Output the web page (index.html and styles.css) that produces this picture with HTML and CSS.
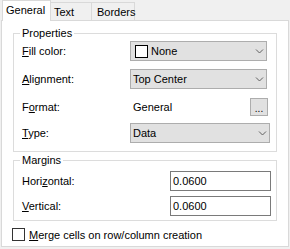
FILE: index.html
```html
<!DOCTYPE html>
<html lang="en">
<head>
    <meta charset="UTF-8">
    <title>Cell properties</title>
    <link rel="stylesheet" href="styles.css">
</head>
<body>
    <div class="dialog">
        <div class="tabs">
            <div class="tab active">General</div>
            <div class="tab tab-text">Text</div>
            <div class="tab tab-borders">Borders</div>
        </div>
        <div class="panel">
            <fieldset class="group props">
                <legend>Properties</legend>
                <div class="row first">
                    <label><u>F</u>ill color:</label>
                    <div class="combo">
                        <span class="swatch"></span>None
                        <svg class="chev" width="9" height="5" viewBox="0 0 9 5"><path d="M1 0.5 L4.5 4 L8 0.5" fill="none" stroke="#606060"/></svg>
                    </div>
                </div>
                <div class="row">
                    <label><u>A</u>lignment:</label>
                    <div class="combo">
                        Top Center
                        <svg class="chev" width="9" height="5" viewBox="0 0 9 5"><path d="M1 0.5 L4.5 4 L8 0.5" fill="none" stroke="#606060"/></svg>
                    </div>
                </div>
                <div class="row">
                    <label>F<u>o</u>rmat:</label>
                    <span class="value">General</span>
                    <div class="dots">...</div>
                </div>
                <div class="row type">
                    <label><u>T</u>ype:</label>
                    <div class="combo wide">
                        Data
                        <svg class="chev" width="9" height="5" viewBox="0 0 9 5"><path d="M1 0.5 L4.5 4 L8 0.5" fill="none" stroke="#606060"/></svg>
                    </div>
                </div>
            </fieldset>
            <fieldset class="group margins">
                <legend>Margins</legend>
                <div class="row first">
                    <label class="long">Hori<u>z</u>ontal:</label>
                    <input type="text" value="0.0600">
                </div>
                <div class="row">
                    <label class="long"><u>V</u>ertical:</label>
                    <input type="text" value="0.0600">
                </div>
            </fieldset>
            <div class="check">
                <span class="box"></span>
                <span><u>M</u>erge cells on row/column creation</span>
            </div>
        </div>
    </div>
</body>
</html>
```

FILE: styles.css
```css
* {
    box-sizing: border-box;
}
body {
    margin: 0;
    background: #f0f0f0;
    font: 11px "Liberation Sans", Arial, sans-serif;
    color: #000;
}
.dialog {
    width: 290px;
    height: 249px;
}

/* tabs */
.tabs {
    display: flex;
    align-items: flex-end;
    height: 20px;
    padding-left: 2px;
}
.tab {
    display: flex;
    align-items: center;
    height: 18px;
    padding-left: 3px;
    margin-left: -1px;
    border: 1px solid #d9d9d9;
    border-bottom: 0;
    background: #f0f0f0;
}
.tab.active {
    position: relative;
    z-index: 1;
    width: 49px;
    height: 21px;
    margin-left: 0;
    margin-bottom: -1px;
    padding-bottom: 3px;
    background: #fff;
}
.tab-text {
    width: 42px;
}
.tab-borders {
    width: 44px;
    padding-left: 5px;
}

.panel {
    width: 288px;
    height: 227px;
    margin-left: 1px;
    padding: 6px 0 0 11px;
    background: #fff;
    border: 1px solid #d9d9d9;
}

/* group boxes */
.group {
    width: 264px;
    min-width: 0;
    margin: 0;
    padding: 0 6px 8px;
    border: 1px solid #dcdcdc;
}
.group legend {
    padding: 0 2px;
    line-height: 13px;
}
.margins {
    margin-top: 2px;
    padding-bottom: 4px;
}

.row {
    display: flex;
    align-items: center;
    height: 20px;
    padding-left: 2px;
    margin-top: 8px;
}
.row.first {
    margin-top: 1px;
}
.row.type {
    margin-top: 6px;
}
.margins .row {
    margin-top: 5px;
}
.margins .row.first {
    margin-top: 4px;
}
.row label {
    width: 108px;
    flex: none;
}
.row label.long {
    width: 148px;
}

.combo {
    display: flex;
    align-items: center;
    width: 137px;
    height: 20px;
    padding-left: 2px;
    border: 1px solid #adadad;
    background: #e1e1e1;
}
.combo.wide {
    width: 140px;
}
.chev {
    margin-left: auto;
    margin-right: 2px;
}
.swatch {
    width: 13px;
    height: 13px;
    margin: 0 3px 0 2px;
    border: 1px solid #000;
    background: #fff;
}

.value {
    padding-left: 3px;
}
.dots {
    width: 18px;
    height: 18px;
    margin-left: auto;
    margin-right: 2px;
    border: 1px solid #adadad;
    background: #e1e1e1;
    text-align: center;
    line-height: 19px;
    font-size: 10px;
}

input {
    width: 101px;
    height: 20px;
    margin: 0;
    padding: 0 0 0 2px;
    border: 1px solid #7a7a7a;
    font: inherit;
    color: #000;
    outline: none;
}

.check {
    display: flex;
    align-items: center;
    gap: 4px;
    margin: 7px 0 0 -1px;
}
.box {
    width: 13px;
    height: 13px;
    border: 1px solid #333;
    background: #fff;
}
```
